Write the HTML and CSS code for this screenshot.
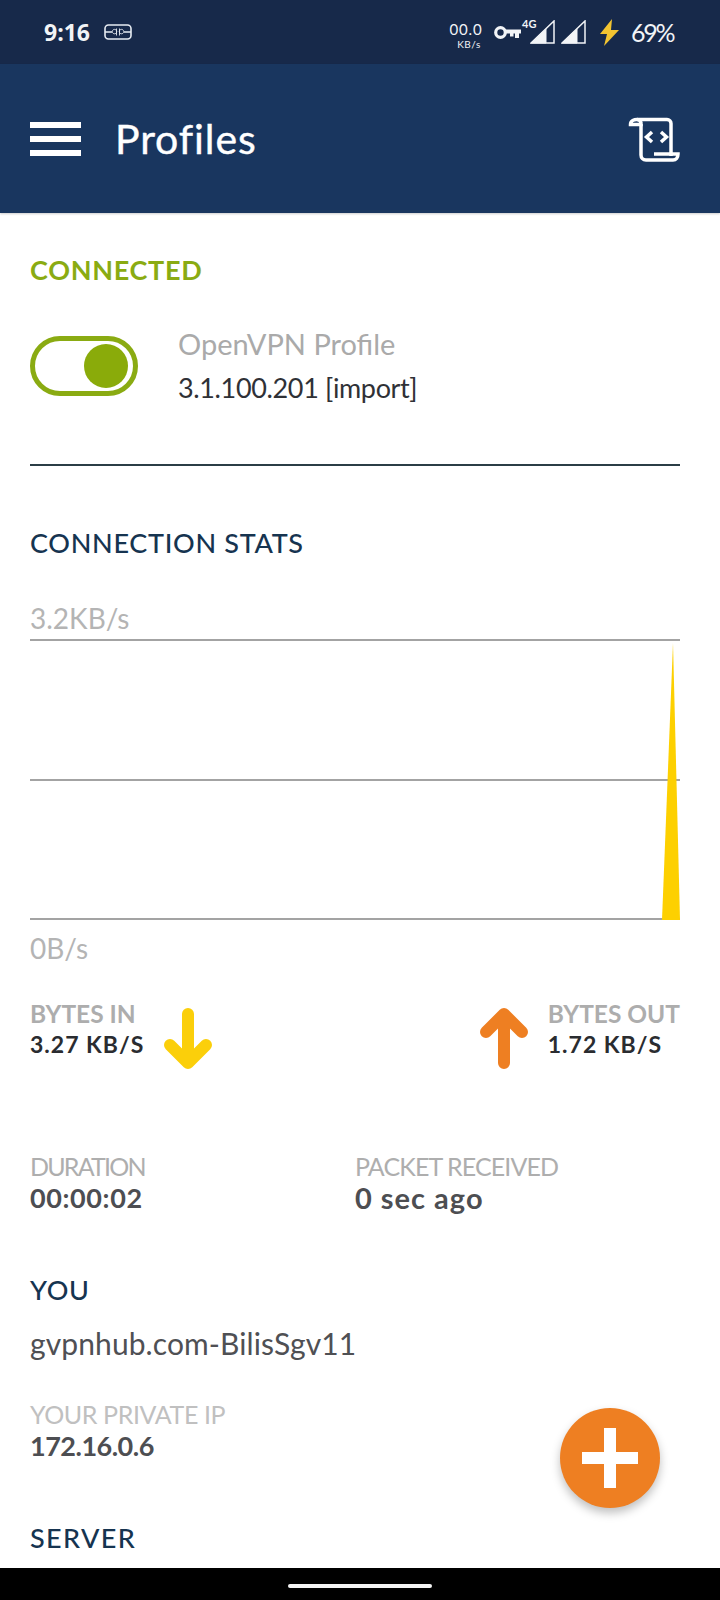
FILE: index.html
```html
<!DOCTYPE html>
<html lang="en">
<head>
    <meta charset="UTF-8">
    <meta name="viewport" content="width=device-width, initial-scale=1.0">
    <title>Profiles</title>
    <link rel="stylesheet" href="styles.css">
</head>
<body>
    <div class="page">
        <div class="status-bar">
            <div class="status-left">
                <span class="clock">9:16</span>
                <svg class="chip" width="28" height="16" viewBox="0 0 28 16" fill="none" stroke="#e6ebf2">
                    <rect x="1" y="1" width="26" height="14" rx="3.5" stroke-width="1.6"/>
                    <path d="M1 8h7M20 8h7" stroke-width="1.4"/>
                    <path d="M12.5 4.5v7M12.5 8.5a2.2 2.2 0 1 0-4 0 2.2 2.2 0 0 0 4 0zM15.5 4.5v7M15.5 8.5a2.2 2.2 0 1 1 4 0 2.2 2.2 0 0 1-4 0z" stroke-width="0.9"/>
                </svg>
            </div>
            <div class="status-right">
                <div class="speed">
                    <span class="speed-num">00.0</span>
                    <span class="speed-unit">KB/s</span>
                </div>
                <svg class="key" width="27" height="15" viewBox="0 0 27 15" fill="none">
                    <circle cx="6.5" cy="7.500" r="4.800" stroke="#f2f4f7" stroke-width="3.200"/>
                    <path d="M11 4.500h16v4h-2v4.500h-4V8.500h-1.500v3H16v-3h-5z" fill="#f2f4f7"/>
                </svg>
                <div class="signal-first">
                    <span class="net-type">4G</span>
                    <svg width="25" height="24" viewBox="0 0 25 24">
                        <path d="M24 1v22H1z" fill="none" stroke="#f2f4f7" stroke-width="1.500"/>
                        <path d="M16 9v14H1z" fill="#f2f4f7" stroke="#f2f4f7"/>
                    </svg>
                </div>
                <svg class="signal" width="25" height="24" viewBox="0 0 25 24">
                    <path d="M24 1v22H1z" fill="none" stroke="#f2f4f7" stroke-width="1.500"/>
                    <path d="M16 9v14H1z" fill="#f2f4f7" stroke="#f2f4f7"/>
                </svg>
                <svg class="bolt" width="21" height="27" viewBox="0 0 21 27">
                    <path d="M13 0L1 15h7L5 27l15-16h-8z" fill="#f3c431"/>
                </svg>
                <span class="battery">69%</span>
            </div>
        </div>

        <div class="app-bar">
            <div class="menu-icon">
                <span></span>
                <span></span>
                <span></span>
            </div>
            <div class="app-title">Profiles</div>
            <svg class="log-icon" width="52" height="48" viewBox="0 0 52 48" fill="none" stroke="#fff" stroke-width="3.500">
                <path d="M9 4.500h30a4 4 0 0 1 4 4V41"/>
                <path d="M13 9.500c0-3-1.500-5-4-5s-6.500 1-6.500 5z"/>
                <path d="M13 9v31c0 3 2 5 5 5h27c3 0 5-2.500 5-6H26"/>
                <path d="M24 17l-5.500 5 5.500 5M33 17l5.500 5-5.500 5"/>
            </svg>
        </div>

        <div class="content">
            <div class="section-title connected">CONNECTED</div>
            <div class="profile-row">
                <div class="toggle"><div class="knob"></div></div>
                <div class="profile-text">
                    <div class="profile-name">OpenVPN Profile</div>
                    <div class="profile-host">3.1.100.201 [import]</div>
                </div>
            </div>
            <div class="divider"></div>

            <div class="section-title stats-title">CONNECTION STATS</div>
            <div class="axis-label top-label">3.2KB/s</div>
            <svg class="chart" width="650" height="296" viewBox="0 0 650 296">
                <path d="M0 5h650M0 145h650M0 284h650" stroke="#a3a3a3" stroke-width="2" fill="none"/>
                <path d="M643 8L632 285h18z" fill="#fdd000"/>
            </svg>
            <div class="axis-label">0B/s</div>

            <div class="bytes-row">
                <div class="bytes-group">
                    <div>
                        <div class="bytes-label">BYTES IN</div>
                        <div class="bytes-value">3.27 KB/S</div>
                    </div>
                    <svg class="arrow" width="48" height="61" viewBox="0 0 48 61" fill="none" stroke="#fbcf0a" stroke-width="12" stroke-linecap="round" stroke-linejoin="round">
                        <path d="M24 6v49M6 37l18 18 18-18"/>
                    </svg>
                </div>
                <div class="bytes-group">
                    <svg class="arrow" width="48" height="61" viewBox="0 0 48 61" fill="none" stroke="#ee7f22" stroke-width="12" stroke-linecap="round" stroke-linejoin="round">
                        <path d="M24 55V6M6 24L24 6l18 18"/>
                    </svg>
                    <div>
                        <div class="bytes-label">BYTES OUT</div>
                        <div class="bytes-value">1.72 KB/S</div>
                    </div>
                </div>
            </div>

            <div class="info-row">
                <div class="info-col">
                    <div class="info-label duration-label">DURATION</div>
                    <div class="info-value time-value">00:00:02</div>
                </div>
                <div class="info-col">
                    <div class="info-label">PACKET RECEIVED</div>
                    <div class="info-value ago-value">0 sec ago</div>
                </div>
            </div>

            <div class="section-title you-title">YOU</div>
            <div class="user-name">gvpnhub.com-BilisSgv11</div>
            <div class="info-label private-label">YOUR PRIVATE IP</div>
            <div class="info-value ip-value">172.16.0.6</div>
            <div class="section-title server-title">SERVER</div>
        </div>

        <div class="nav-bar"><div class="home-pill"></div></div>

        <div class="fab">
            <svg width="56" height="60" viewBox="0 0 56 60">
                <path d="M22 0h12v24h22v12H34v24H22V36H0V24h22z" fill="#fff"/>
            </svg>
        </div>
    </div>
</body>
</html>
```

FILE: styles.css
```css
body {
    margin: 0;
    font-family: Lato, "Open Sans", sans-serif;
    background: #fff;
}
.page {
    position: relative;
    width: 720px;
    height: 1600px;
    display: flex;
    flex-direction: column;
    overflow: hidden;
}

/* status bar */
.status-bar {
    height: 64px;
    flex: none;
    background: #17294a;
    color: #f2f4f7;
    display: flex;
    justify-content: space-between;
    align-items: center;
    padding: 0 45px 0 44px;
}
.status-left {
    display: flex;
    align-items: center;
    gap: 14px;
}
.clock {
    font-family: "Open Sans", sans-serif;
    font-size: 23px;
    font-weight: 700;
    line-height: 30px;
}
.status-right {
    display: flex;
    align-items: center;
}
.speed {
    width: 32px;
    display: flex;
    flex-direction: column;
    align-items: center;
    margin-top: 6px;
}
.speed-num {
    font-size: 15px;
    letter-spacing: 0.8px;
    line-height: 18px;
}
.speed-unit {
    font-size: 10px;
    letter-spacing: 0.5px;
    line-height: 12px;
    margin-left: 6px;
}
.key {
    margin-left: 12px;
    margin-top: 1px;
}
.signal-first {
    position: relative;
    margin-left: 9px;
    display: flex;
}
.net-type {
    position: absolute;
    left: -8px;
    top: -3px;
    font-size: 11px;
    font-weight: 700;
    line-height: 13px;
}
.signal {
    margin-left: 6px;
}
.bolt {
    margin-left: 13px;
}
.battery {
    margin-left: 11px;
    font-size: 25px;
    letter-spacing: -2.2px;
    line-height: 32px;
    width: 44px;
    white-space: nowrap;
}

/* app bar */
.app-bar {
    height: 149px;
    flex: none;
    background: #19365f;
    box-sizing: border-box;
    padding: 0 40px 0 30px;
    display: flex;
    align-items: center;
    box-shadow: 0 1px 2px rgba(0, 0, 0, 0.2);
    position: relative;
}
.menu-icon {
    width: 51px;
    height: 34px;
    display: flex;
    flex-direction: column;
    justify-content: space-between;
    flex: none;
}
.menu-icon span {
    height: 6px;
    background: #fff;
}
.app-title {
    margin-left: 34px;
    font-size: 41px;
    letter-spacing: 0.9px;
    -webkit-text-stroke: 0.4px #fff;
    color: #fff;
    line-height: 50px;
    flex: 1;
}

/* main content */
.content {
    flex: 1;
    overflow: hidden;
    padding: 0 40px 0 30px;
}
.section-title {
    font-size: 27px;
    font-weight: 500;
    letter-spacing: 0.7px;
    line-height: 34px;
    color: #163450;
}
.connected {
    margin-top: 40px;
    color: #8aab12;
    font-weight: 700;
}
.profile-row {
    margin-top: 35px;
    display: flex;
    align-items: center;
    gap: 40px;
}
.toggle {
    width: 108px;
    height: 60px;
    box-sizing: border-box;
    border: 5px solid #8aab12;
    border-radius: 30px;
    display: flex;
    align-items: center;
    justify-content: flex-end;
    padding-right: 5px;
}
.knob {
    width: 44px;
    height: 44px;
    border-radius: 50%;
    background: #8aab0a;
}
.profile-name {
    font-size: 29px;
    line-height: 44px;
    color: #aaaaaa;
}
.profile-host {
    font-size: 27px;
    letter-spacing: -0.36px;
    line-height: 44px;
    color: #2f3136;
}
.divider {
    margin-top: 54px;
    height: 2px;
    background: #2b3d46;
}
.stats-title {
    margin-top: 60px;
}
.axis-label {
    font-size: 28px;
    line-height: 34px;
    color: #b4b4b4;
}
.top-label {
    margin-top: 41px;
}
.chart {
    display: block;
}
.bytes-row {
    margin-top: 35px;
    display: flex;
    justify-content: space-between;
}
.bytes-group {
    display: flex;
    gap: 20px;
}
.arrow {
    margin-top: 8px;
}
.bytes-label {
    font-size: 24.5px;
    font-weight: 700;
    line-height: 28px;
    color: #adadad;
}
.bytes-value {
    font-size: 23px;
    font-weight: 700;
    letter-spacing: 1px;
    line-height: 32px;
    color: #2a2c30;
}
.info-row {
    margin-top: 81px;
    display: flex;
}
.info-col {
    width: 325px;
}
.info-label {
    font-size: 25px;
    letter-spacing: -0.9px;
    line-height: 32px;
    color: #aeaeae;
}
.duration-label {
    letter-spacing: -1.8px;
}
.info-value {
    font-size: 27px;
    font-weight: 700;
    line-height: 32px;
    color: #4d4e52;
}
.time-value {
    letter-spacing: 0.6px;
}
.ago-value {
    font-size: 29px;
    letter-spacing: 1px;
}
.ip-value {
    letter-spacing: -0.5px;
}
.you-title {
    margin-top: 59px;
}
.user-name {
    margin-top: 18px;
    font-size: 30px;
    letter-spacing: 0.1px;
    line-height: 36px;
    color: #4f5054;
}
.private-label {
    margin-top: 37px;
    letter-spacing: -0.4px;
    color: #c0c0c0;
}
.server-title {
    margin-top: 59px;
    letter-spacing: 1.400px;
}

/* bottom */
.nav-bar {
    height: 32px;
    flex: none;
    background: #000;
    display: flex;
    justify-content: center;
    padding-top: 16px;
    box-sizing: border-box;
}
.home-pill {
    width: 144px;
    height: 4px;
    background: #f4f4f4;
    border-radius: 2px;
}
.fab {
    position: absolute;
    left: 560px;
    top: 1408px;
    width: 100px;
    height: 100px;
    border-radius: 50%;
    background: #ee7f22;
    box-shadow: 0 5px 10px rgba(0, 0, 0, 0.25);
    display: flex;
    align-items: center;
    justify-content: center;
}
```
